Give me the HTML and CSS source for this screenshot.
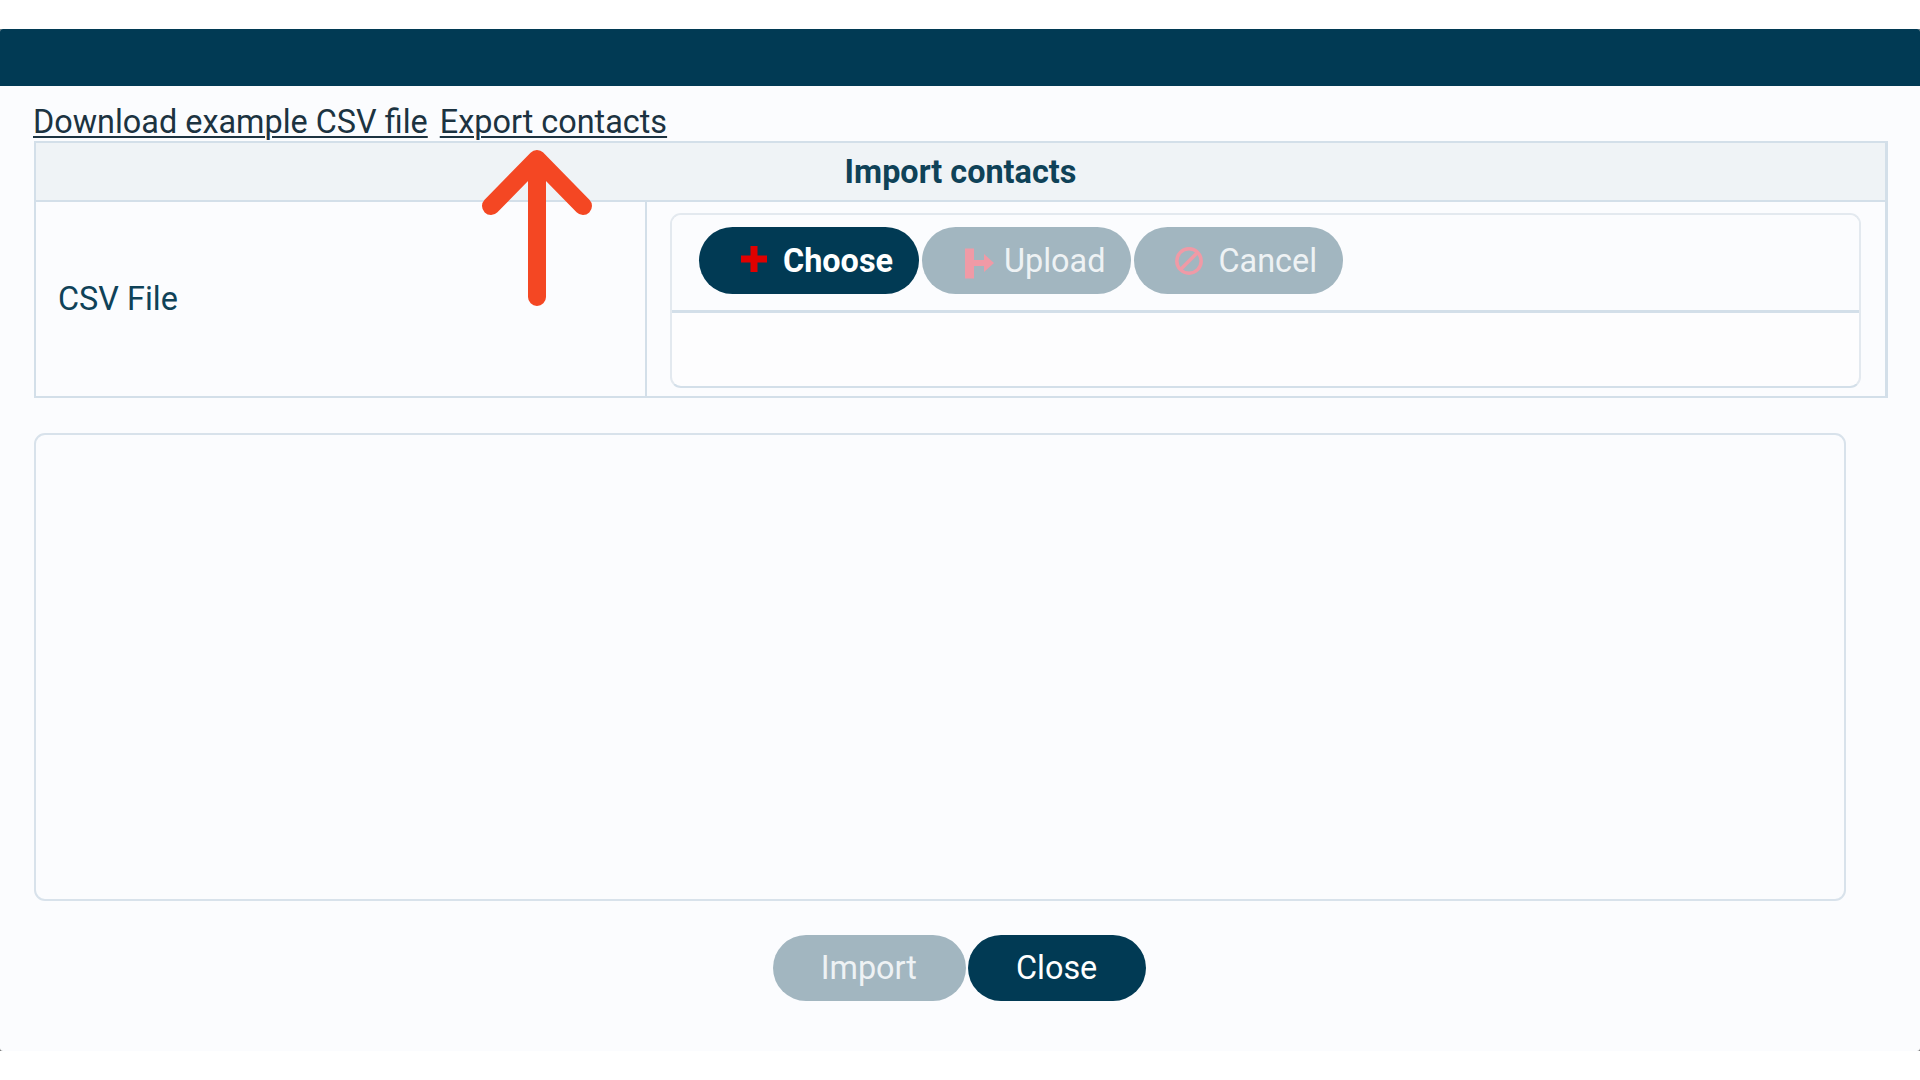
FILE: index.html
```html
<!DOCTYPE html>
<html lang="en">
<head>
<meta charset="utf-8">
<title>Import contacts</title>
<link rel="stylesheet" href="styles.css">
</head>
<body>
<div class="backdrop">
<main class="dialog">
  <header class="dialog-bar"></header>
  <div class="dialog-body">
    <nav class="links">
      <a class="link" href="#">Download example CSV file</a>
      <a class="link" href="#">Export contacts</a>
    </nav>
    <section class="import-table">
      <h2 class="import-title">Import contacts</h2>
      <div class="import-row">
        <div class="import-label">CSV File</div>
        <div class="import-field">
          <div class="uploader">
            <div class="uploader-bar">
              <button class="btn btn-dark btn-strong btn-icon" type="button">
                <svg class="icon" viewBox="0 0 28 28"><path d="M14 -1v26M1 12h26" fill="none" stroke="#e00000" stroke-width="7"/></svg>
                Choose
              </button>
              <button class="btn btn-muted btn-icon btn-upload" type="button">
                <svg class="icon" viewBox="0 0 28 28"><path d="M2 1.500h9v30H2z" fill="#f09aa6"/><path d="M11 13h10V7l10 9-10 9v-6H11z" fill="#f09aa6"/></svg>
                Upload
              </button>
              <button class="btn btn-muted btn-icon" type="button">
                <svg class="icon" viewBox="0 0 28 28"><circle cx="14" cy="14" r="12.200" fill="none" stroke="#f09aa6" stroke-width="3.500"/><path d="M5.500 22.500 22.500 5.500" stroke="#f09aa6" stroke-width="3.500"/></svg>
                Cancel
              </button>
            </div>
            <div class="uploader-content"></div>
          </div>
        </div>
      </div>
    </section>
    <div class="log-box"></div>
    <footer class="actions">
      <button class="btn btn-muted btn-wide" type="button">Import</button>
      <button class="btn btn-dark btn-wide" type="button">Close</button>
    </footer>
  </div>
</main>
</div>
<svg class="callout-arrow" viewBox="0 0 130 180" aria-hidden="true">
  <path d="M67 19V157M21 66 67 19l46 47" fill="none" stroke="#f44723" stroke-width="18" stroke-linecap="round" stroke-linejoin="round"/>
</svg>
</body>
</html>
```
FILE: styles.css
```css
html, body { margin: 0; height: 100%; background: #fff; }
body {
  font-family: Roboto, "Liberation Sans", sans-serif;
  color: #0f4258;
  overflow: hidden;
  position: relative;
}
.backdrop {
  margin-top: 29px;
  height: 1022px;
  background: #777;
}
.dialog {
  height: 100%;
  background: #fbfcfe;
  border-radius: 3px;
  overflow: hidden;
  display: flex;
  flex-direction: column;
}
.dialog-bar { height: 57px; background: #013a54; flex: none; }
.dialog-body { padding: 0 32px 0 33px; }
.links { display: flex; gap: 12px; height: 55px; align-items: flex-end; }
.link { color: #1c3341; text-decoration: underline; text-decoration-thickness: 2px; text-underline-offset: 3px; line-height: 37px; font-size: 32.4px; }
.import-table {
  margin-left: 1px;
  border: 2px solid #d3dfe9;
  border-right-width: 3px;
  width: 1854px;
  box-sizing: border-box;
}
.import-title {
  margin: 0;
  height: 57px;
  line-height: 59px;
  font-size: 32.4px;
  font-weight: 700;
  text-align: center;
  background: #eff3f6;
  border-bottom: 2px solid #d3dfe9;
}
.import-row { display: flex; height: 194px; }
.import-label {
  width: 611px;
  flex: none;
  box-sizing: border-box;
  padding-left: 22px;
  display: flex;
  align-items: center;
  font-size: 32.4px;
  border-right: 2px solid #d3dfe9;
}
.import-field { flex: 1; padding: 11px 24px 8px 23px; }
.uploader {
  height: 175px;
  border: 2px solid #e3e9ef;
  border-bottom-color: #d3dfe9;
  border-radius: 11px;
  background: #fdfdfe;
  box-sizing: border-box;
  display: flex;
  flex-direction: column;
}
.uploader-bar {
  height: 98px;
  box-sizing: border-box;
  padding: 12px 0 0 27px;
  display: flex;
  gap: 3px;
  border-bottom: 3px solid #d3dfe9;
  background: #fbfcfe;
  border-radius: 9px 9px 0 0;
}
.uploader-content { flex: 1; }
.btn {
  height: 67px;
  border: 0;
  border-radius: 34px;
  padding: 0 26px;
  font-family: inherit;
  font-size: 32.4px;
  display: inline-flex;
  align-items: center;
  gap: 15px;
  color: #fff;
}
.btn-icon { padding-left: 41px; }
.btn-upload { gap: 13px; }
.btn-dark { background: #013a54; }
.btn-muted { background: #a2b6c0; color: #eef2f4; }
.btn-strong { font-weight: 700; }
.icon { width: 28px; height: 28px; flex: none; overflow: visible; }
.log-box {
  margin-top: 35px;
  margin-left: 1px;
  width: 1812px;
  height: 468px;
  box-sizing: border-box;
  border: 2px solid #d8e2eb;
  border-radius: 11px;
}
.actions { display: flex; justify-content: center; gap: 2px; margin-top: 34px; padding-right: 2px; }
.btn-wide { height: 66px; padding: 0 49px 0 48px; }
.callout-arrow { position: absolute; left: 470px; top: 140px; width: 130px; height: 180px; }
```
